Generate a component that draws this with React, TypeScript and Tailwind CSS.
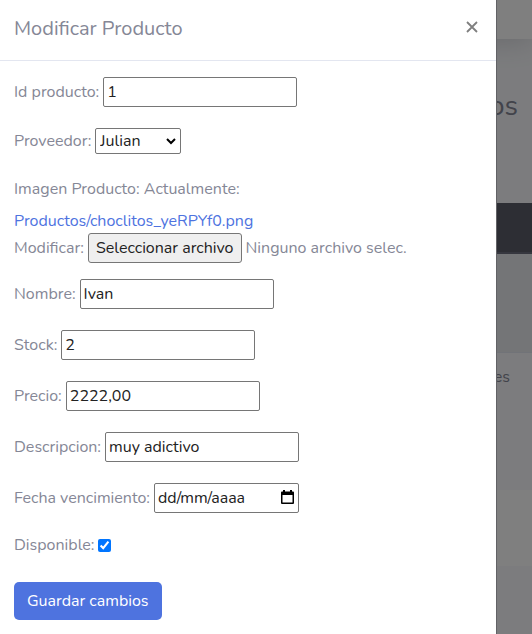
import { useRef, useState, type ReactNode } from "react";

function Field({ id, label, children }: { id: string; label: string; children: ReactNode }) {
  return (
    <div className="flex items-center gap-1">
      <label htmlFor={id}>{label}</label>
      {children}
    </div>
  );
}

const inputClass =
  "h-[30px] w-[194px] rounded-[2px] border border-[#767676] bg-white px-[3px] text-[#222222]";

function TextField({ id, label, value }: { id: string; label: string; value: string }) {
  return (
    <Field id={id} label={label}>
      <input id={id} name={id} type="text" defaultValue={value} className={inputClass} />
    </Field>
  );
}

function ProductsPage() {
  return (
    <div className="col-start-1 row-start-1 bg-[#f8f9fc] text-right text-[#858796]" aria-hidden="true">
      <div className="h-[39px] bg-white shadow-[0_2px_28px_rgba(58,59,69,0.2)]" />
      <div className="flex h-[164px] items-start justify-end pt-[49px] pr-[14px]">
        <h1 className="text-[28px] leading-9 text-[#858796]">Productos</h1>
      </div>
      <div className="h-[51px] border-b-2 border-[#6c6e7e] bg-[#5a5c69]" />
      <div className="h-[98px] bg-[#e9eaee]" />
      <div className="h-[138px] border-t border-[#e3e6f0] pt-3 pr-[22px]">Opciones</div>
      <div className="h-[76px] bg-white" />
    </div>
  );
}

function EditProductDialog() {
  const fileInput = useRef<HTMLInputElement>(null);
  const [fileName, setFileName] = useState("Ninguno archivo selec.");

  return (
    <div
      role="dialog"
      aria-labelledby="dialog-title"
      className="col-start-1 row-start-1 mr-[35px] border-r border-[#626266] bg-white text-[#858796]"
    >
      <header className="flex h-[61px] items-center justify-between border-b border-[#e3e6f0] pr-4 pb-1 pl-[14px]">
        <h5 id="dialog-title" className="pt-0.5 text-xl">
          Modificar Producto
        </h5>
        <button type="button" aria-label="Cerrar" className="flex w-4 items-center justify-center pb-0.5 text-[#7f7f7f]">
          <svg width="12" height="12" viewBox="0 0 12 12" stroke="currentColor" strokeWidth="1.8">
            <path d="M1 1 11 11M11 1 1 11" />
          </svg>
        </button>
      </header>

      <form className="flex flex-col items-start gap-[21px] px-[14px] pt-4 pb-[14px]">
        <TextField id="id_producto" label="Id producto:" value="1" />

        <Field id="proveedor" label="Proveedor:">
          <span className="relative">
            <select
              id="proveedor"
              className="block h-[26px] w-[86px] appearance-none rounded-[2px] border border-[#767676] bg-white px-1 text-[#222222]"
            >
              <option>Julian</option>
            </select>
            <svg
              className="pointer-events-none absolute top-[10px] right-[5px]"
              width="10"
              height="7"
              viewBox="0 0 10 7"
              fill="none"
              stroke="#000000"
              strokeWidth="2"
            >
              <path d="M1 1 5 5 9 1" />
            </svg>
          </span>
        </Field>

        <div className="flex flex-col pt-0.5">
          <p className="mb-2">Imagen Producto: Actualmente:</p>
          <a href="#imagen" className="text-[#4e73df]">
            Productos/choclitos_yeRPYf0.png
          </a>
          <div className="mb-[-5px] flex items-center gap-1">
            <label htmlFor="imagen">Modificar:</label>
            <input
              ref={fileInput}
              id="imagen"
              type="file"
              className="hidden"
              onChange={(event) => setFileName(event.target.files?.[0]?.name ?? "Ninguno archivo selec.")}
            />
            <button
              type="button"
              onClick={() => fileInput.current?.click()}
              className="h-[30px] rounded-[3px] border border-[#767676] bg-[#efefef] px-[7px] text-[#222222]"
            >
              Seleccionar archivo
            </button>
            <span>{fileName}</span>
          </div>
        </div>

        <TextField id="nombre" label="Nombre:" value="Ivan" />
        <TextField id="stock" label="Stock:" value="2" />
        <TextField id="precio" label="Precio:" value="2222,00" />
        <TextField id="descripcion" label="Descripcion:" value="muy adictivo" />

        <Field id="fecha" label="Fecha vencimiento:">
          <span className="relative">
            <input
              id="fecha"
              type="text"
              placeholder="dd/mm/aaaa"
              className="block h-[30px] w-[145px] rounded-[2px] border border-[#767676] bg-white px-[3px] text-[#222222] placeholder:text-[#222222]"
            />
            <svg
              className="pointer-events-none absolute top-[7px] right-[5px]"
              width="13"
              height="15"
              viewBox="0 0 13 15"
            >
              <path
                fill="#000000"
                fillRule="evenodd"
                d="M2 0h2v1.500h5V0h2v1.500h1a1 1 0 0 1 1 1V13a1 1 0 0 1-1 1H1a1 1 0 0 1-1-1V2.500a1 1 0 0 1 1-1h1zM1.500 5v7.500h10V5z"
              />
            </svg>
          </span>
        </Field>

        <div className="-mt-px">
          <Field id="disponible" label="Disponible:">
            <input id="disponible" type="checkbox" defaultChecked className="size-[13px] accent-[#0075ff]" />
          </Field>
        </div>

        <button type="submit" className="mt-1 h-[38px] rounded-[5px] bg-[#4e73df] px-[13px] text-white">
          Guardar cambios
        </button>
      </form>
    </div>
  );
}

export default function App() {
  return (
    <main className="grid min-h-screen grid-cols-1 overflow-hidden font-['Nunito','Lato',sans-serif] text-base">
      <ProductsPage />
      <div className="col-start-1 row-start-1 bg-black/50" />
      <EditProductDialog />
    </main>
  );
}
